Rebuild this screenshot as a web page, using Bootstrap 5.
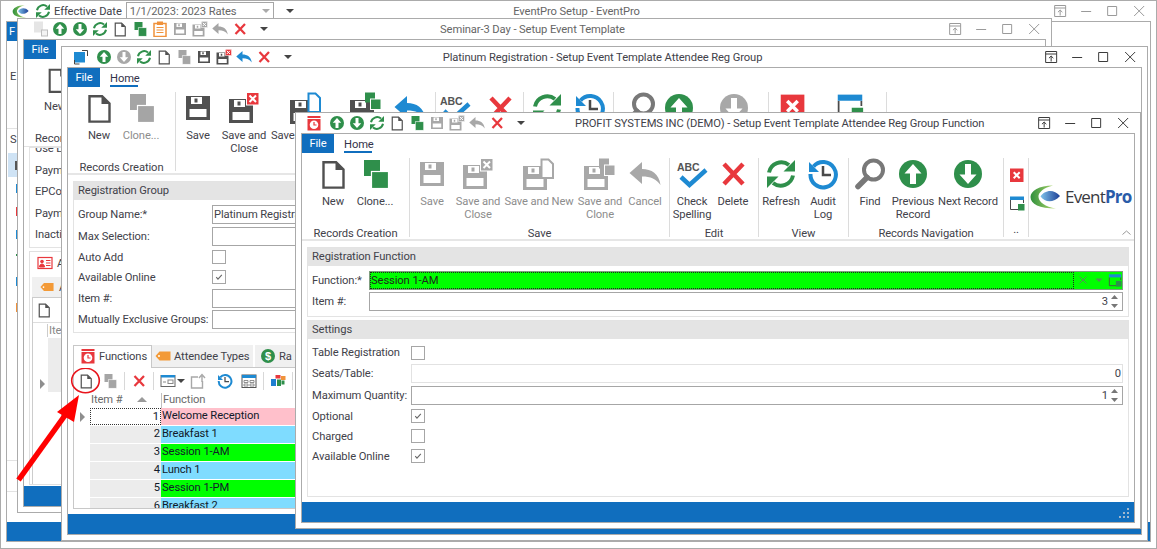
<!DOCTYPE html>
<html lang="en"><head><meta charset="utf-8"><title>EventPro Setup</title>
<link rel="stylesheet" href="https://cdn.jsdelivr.net/npm/bootstrap@5.3.0/dist/css/bootstrap.min.css">
<style>
html,body{margin:0;height:549px;overflow:hidden;background:#fff}
body{font-family:Roboto,"Noto Sans",sans-serif;font-size:11.2px;letter-spacing:-.1px;line-height:13px;color:#42424a}
.dsk{position:relative;width:1157px;height:549px;overflow:hidden}
.wn{position:absolute;background:#fff;border:1px solid #ababab;display:flex;flex-direction:column;overflow:hidden}
.w1{left:0;top:0;width:1157px;height:549px}
.w2{left:17px;top:18px;width:1035px;height:495px}
.w3{left:61px;top:46px;width:1087px;height:495px}
.w4{left:295px;top:112px;width:846px;height:417px}
.ttl{height:20px;flex:none;display:flex;align-items:center;white-space:nowrap}
.ttl-side{flex:1 1 0;display:flex;align-items:center;min-width:0}
.ttl-end{justify-content:flex-end;padding-right:4px}
.ctl{width:26.3px;height:16px;display:block;color:#3c3c3c}
.off .ctl{color:#9a9a9a}
.off .ttl-text{color:#666}
.qa{width:16px;height:16px;flex:none;margin-right:4px;display:block}
.caret{width:0;height:0;border:4px solid transparent;border-top:4px solid #444;border-bottom:0;flex:none}
.cli{flex:1;min-height:0;margin:0 5px 5px;border:1px solid #ababab;display:flex;flex-direction:column;overflow:hidden;background:#fff}
.w1 .cli{margin-bottom:6px}
.tabs{height:19px;flex:none;display:flex}
.ftab{width:32px;height:19px;background:#106ebe;color:#fff;text-align:center;line-height:19px}
.htab{margin-left:10px;width:28px;height:19px;border-bottom:2px solid #106ebe;text-align:center;line-height:21px;color:#33334a}
.ribbon{height:88px;flex:none;display:flex;padding-top:5px;border-bottom:2px solid #e6e6e6}
.rgroup{display:flex;flex-direction:column;height:79px;flex:none;border-right:1px solid #dcdcdc;position:relative}
.rbtns{display:flex;height:69px;flex:none}
.rbtn{display:flex;flex-direction:column;align-items:center;text-align:center;flex:none}
.rbtn svg{width:32px;height:32px;display:block;margin-bottom:5px;flex:none}
.rname{text-align:center;height:14px;line-height:14px;white-space:nowrap}
.rdis{color:#8d8d8d}
.lft{align-self:flex-start;padding-left:3px}
.g1{width:108px}.g2{width:260px}.g3{width:89px}.g4{width:90px}.g5{width:155px}.g6{width:25px}
.g3b{width:88px}
.g7{width:118px}
.g7 .rbtn svg{width:28px;height:28px}
.stack{display:flex;flex-direction:column;align-items:center;padding-top:9px;gap:12px;height:69px;width:25px}
.stack svg{width:16px;height:16px;display:block}
.pl10{padding-left:10px}
.b38{width:38px}.b40{width:40px}.b42{width:42px}.b44{width:44px}.b46{width:46px}.b48{width:48px}.b52{width:52px}.b26{width:26px}.b66{width:66px}.b74{width:74px}.b76{width:76px}.b84{width:84px}
.logo{flex:1;position:relative;display:flex;align-items:flex-start;padding:27px 0 0 1px;gap:5px}
.logo .lgm{width:30px;height:24px;flex:none}
.logotxt{font-family:"Open Sans",sans-serif;font-size:17px;line-height:20px;color:#3a3a40;letter-spacing:-.8px;margin-top:2px}
.logotxt b{color:#2a5ba8;font-weight:700}
.chev{position:absolute;right:3px;bottom:4px;width:9px;height:5px}
.pane{flex:1;min-height:0;padding:6px 5px 5px;display:flex;flex-direction:column;overflow:hidden}
.gbox{border:1px solid #e3e3e3;display:flex;flex-direction:column;flex:none}
.ghead{height:18px;background:#e4e4e4;padding-left:4px;line-height:17px;flex:none}
.frow{height:21px;display:flex;align-items:center;flex:none;padding-left:4px}
.fr20{height:20px}.fr22{height:22px}
.flab{flex:none;white-space:nowrap}
.fld{height:19px;border:1px solid #a6a6a6;background:#fff;flex:1;display:flex;align-items:center;padding:0 1px;min-width:0;white-space:nowrap}
.fld.soft{border-color:#e2e2e2}
.val{margin-left:auto}
.chk{width:14px;height:14px;border:1px solid #a6a6a6;background:#fff;display:block;flex:none}
.spin{width:9px;height:15px;display:block;flex:none;margin:0 2px 0 2px}
.status{height:20px;background:#106ebe;flex:none;position:relative}
.grip{position:absolute;right:5px;bottom:4px;width:10px;height:10px}
.greenf{height:19px;flex:1;background:#00ff00;border:1px solid #7f9f7f;display:flex;align-items:center;min-width:0}
.greeni{flex:1;height:17px;border:1px dotted #222;line-height:15px;color:#1b2b1b}
.gric{width:14px;height:14px;display:block;flex:none;margin:0 0 0 2px}
.l4{width:57px}.l3{width:134px}.l5{width:99px}
.wf{margin-right:5px}
.mt4{margin-top:4px}.mt3{margin-top:3px}
.sg{height:70px}
.sgx{height:177px;margin-top:3px}
.w3g{height:152px}
.l3f{flex:none;width:300px}
.ptabs{display:flex;height:22px;flex:none;margin-top:12px;align-items:flex-start;position:relative}
.ptab{height:22px;display:flex;align-items:center;gap:3px;background:#f0f0f0;border-right:2px solid #fff;flex:none;white-space:nowrap}
.ptab.on{background:#fff;border:1px solid #c8c8c8;border-bottom:0;height:23px;width:79px;padding:0 0 2px 6px;position:relative;z-index:1}
.ptab svg{width:16px;height:16px;flex:none}
.p2{width:103px;padding-left:3px}
.p3{width:60px;padding-left:5px}
.pbox{flex:1;min-height:0;border:1px solid #c8c8c8;display:flex;flex-direction:column;overflow:hidden}
.gtool{height:25px;display:flex;align-items:center;padding-left:4px;flex:none}
.gtool svg{width:16px;height:16px;flex:none;display:block}
.gsp{width:1px;height:18px;background:#d8d8d8;flex:none}
.ghdr{height:15px;display:flex;flex:none;color:#6a6a6a}
.gind{width:16px;flex:none;position:relative}
.gitem{width:71px;flex:none;padding-left:1px;position:relative}
.gfn{flex:1;border-left:1px solid #c0c0c0;padding-left:1px}
.grow1{height:17px;display:flex;flex:none;margin-bottom:1px;line-height:16px;color:#111a2a;white-space:nowrap}
.gnum{width:71px;flex:none;background:#ececec;text-align:right;padding-right:1px}
.gnum.cur{background:#fff;border:1px dotted #333}
.gcell{flex:1;padding-left:1px}
.pink{background:#ffc0cb}.sky{background:#7fdcff}.lime{background:#00ff00}
.tri{position:absolute;left:6px;top:4px;width:0;height:0;border:5px solid transparent;border-left:5px solid #8e8e8e;border-right:0}
.sorttri{position:absolute;left:47px;top:4px;width:0;height:0;border:5px solid transparent;border-bottom:5px solid #9a9a9a;border-top:0}
.over{position:absolute;left:0;top:0;width:1157px;height:549px;pointer-events:none}
.w1side{flex:1;min-height:0;display:flex;flex-direction:column;width:12px;overflow:hidden}
.clip{white-space:nowrap}
.lgrey{border-bottom:1px solid #e3e3e3}
.hl{height:24px;background:#cfe3f5;margin-left:1px;flex:none;display:flex;align-items:center;justify-content:flex-end}
.pad2l{padding-left:2px}
.w2r{height:107px;flex:none;display:flex;flex-direction:column;border-bottom:1px solid #e3e3e3}
.w2n{padding-left:20px;padding-top:7px}
.w2n svg{width:28px;height:28px;display:block;margin-bottom:6px}
.w2rec{padding-left:11px;margin-top:19px}
.w2box{margin:0 0 0 5px;height:101px;border:1px solid #e3e3e3;flex:none;padding-left:5px;line-height:21.6px;overflow:hidden;white-space:nowrap}
.w2box div:first-child{margin-top:-10px}
.w2ptab{margin:3px 0 0 5px;height:234px;border:1px solid #e0e0e0;flex:none;padding:2px 0 0 2px;overflow:hidden;white-space:nowrap}
.w2a{display:flex;align-items:center;gap:4px;height:18px;padding-left:5px}
.w2a svg{width:16px;height:16px}
.w2b{display:flex;align-items:center;gap:5px;height:20px;margin-top:5px;background:#f0f0f0;padding-left:8px;width:60px}
.w2b svg{width:14px;height:16px}
.w2c{border:1px solid #ccc;height:190px}
.w2d{height:25px;padding:4px 0 0 3px;border-bottom:1px solid #ddd}
.w2d svg{width:16px;height:16px;display:block}
.w2e{height:15px;padding-left:14px;color:#888;line-height:15px}
.w2e span{border-left:1px solid #ccc;padding-left:1px}
.w2g{height:54px;margin-left:15px;background:#ececec;position:relative}
.w2t{position:absolute;left:-8px;top:41px;width:0;height:0;border:5px solid transparent;border-left:5px solid #8e8e8e;border-right:0}
.pdl{padding:4px 0 0 3px;height:24px;flex:none}
.sp1{height:88px;flex:none;padding-top:29px;padding-left:3px}
.ic-green svg,svg.ic-green{color:#2f8f4b}
.ic-dark svg,svg.ic-dark{color:#505050}
.ic-grey svg,svg.ic-grey{color:#a5a5a5}
.ic-ltgrey svg,svg.ic-ltgrey{color:#a8a8a8}
.ic-red svg,svg.ic-red{color:#e8383d}
.ic-blue svg,svg.ic-blue{color:#1e8ad2}
.gx{--xb:#a8a8a8}
.bl1{--db:#1e8ad2}.gr1{--db:#2f8f4b}
.q4first{margin-left:10px;margin-right:7px}
.q3first{margin-left:11px;margin-right:7px}
.q2first{margin-left:15px;margin-right:3px}
.f-left{flex:none}
.logoq{margin-left:11px;width:17px;height:13px;margin-right:6px}
.refq{margin-right:3px}
.combo{width:148px;height:18px;border:1px solid #a6a6a6;padding:0 3px;color:#666;white-space:nowrap;flex:none}
.combo .caret{border-top-color:#aaa}
.tailc{margin-left:12px}
.w4 .ttl-text{margin-left:50px}
.w4 .ttl-end{flex:none;margin-left:auto}
.tgap1{margin-left:1px}.tgap5{margin-left:5px}.tgap6{margin-left:6px}.tgap8{margin-left:8px}.tgap11{margin-left:11px}
.d1{display:block;width:3px;height:9px;background:#555;margin-right:1px}
.d2{display:block;width:3px;height:9px;margin:14px 0 0 auto;flex:none}
.d2.a{background:#1e8ad2;margin-top:7px}.d2.b{background:#e8383d}.d2.c{background:#1e8ad2}.d2.d{background:#2f8f4b;height:2px;margin-top:15px}.d2.e{background:#1e8ad2;margin-top:21px}.d2.f{background:#f0923b;margin-top:17px}
.spx{height:30px;flex:none}
.spy{height:31px;flex:none;border-top:1px solid #e3e3e3}
.w1v{height:19px}
</style></head><body>
<svg width="0" height="0" class="position-absolute" aria-hidden="true"><defs>
<linearGradient id="lb" x1="0" x2="1"><stop offset="0" stop-color="#7fc3ea"/><stop offset="1" stop-color="#1c3f96"/></linearGradient>
<linearGradient id="lg" x1="0" x2="1"><stop offset="0" stop-color="#2f8f3c"/><stop offset="1" stop-color="#b6da6e"/></linearGradient>
<symbol id="s-new" viewBox="0 0 32 32"><path d="M6.5 4.2h12.600l7.400 7.400v18H6.500z" fill="#fff" stroke="currentColor" stroke-width="2.400"/><path d="M18.500 4l8 8h-8z" fill="currentColor"/></symbol>
<symbol id="s-clone" viewBox="0 0 32 32"><rect x="5" y="2" width="16" height="16" fill="currentColor"/><rect x="12.500" y="13.500" width="17" height="17" fill="currentColor" stroke="#fff" stroke-width="1.200"/></symbol>
<symbol id="s-up" viewBox="0 0 32 32"><circle cx="16" cy="16" r="14" fill="currentColor"/><path d="M16 6l8.500 9.500h-5.500v10.500h-6v-10.500h-5.500z" fill="#fff"/></symbol>
<symbol id="s-down" viewBox="0 0 32 32"><circle cx="16" cy="16" r="14" fill="currentColor"/><path d="M16 26l8.500-9.500h-5.500v-10.500h-6v10.500h-5.500z" fill="#fff"/></symbol>
<symbol id="s-ref" viewBox="0 0 32 32"><path d="M4 14.500A12.500 12.500 0 0 1 24 7" fill="none" stroke="currentColor" stroke-width="4"/><path d="M18.500 13.500H30V2z" fill="currentColor"/><path d="M28 17.500A12.500 12.500 0 0 1 8 25" fill="none" stroke="currentColor" stroke-width="4"/><path d="M13.500 18.500H2V30z" fill="currentColor"/></symbol>
<symbol id="s-sv" viewBox="0 0 32 32"><path fill-rule="evenodd" d="M4 4h24v24H4zM9 5v7h11V5zM12.500 6.500h3v4h-3zM7.500 17v8h17v-8z" fill="currentColor"/></symbol>
<symbol id="s-svx" viewBox="0 0 32 32"><path fill-rule="evenodd" d="M1 7h24v24H1zM6 8v7h11V8zM9.500 9.500h3v4h-3zM4.500 20v8h17v-8z" fill="currentColor"/><rect x="18.500" y="0.500" width="12.500" height="12.500" fill="var(--xb,#e8383d)" stroke="#fff"/><path d="M21.500 3.500l6.500 6.500M28 3.500l-6.500 6.500" stroke="#fff" stroke-width="2"/></symbol>
<symbol id="s-svn" viewBox="0 0 32 32"><path fill-rule="evenodd" d="M0 8h24v24H0zM5 9v7h11V9zM8.500 10.500h3v4h-3zM3.500 21v8h17v-8z" fill="currentColor"/><path d="M18.500 1.500h7l4.500 4.500v14h-11.500z" fill="#fff" stroke="var(--db,currentColor)" stroke-width="2"/></symbol>
<symbol id="s-svc" viewBox="0 0 32 32"><path fill-rule="evenodd" d="M0 8h24v24H0zM5 9v7h11V9zM8.500 10.500h3v4h-3zM3.500 21v8h17v-8z" fill="currentColor"/><rect x="15" y="0.500" width="10" height="10" fill="var(--db,currentColor)"/><rect x="20.500" y="7" width="10.500" height="10.500" fill="var(--db,currentColor)" stroke="#fff"/></symbol>
<symbol id="s-und" viewBox="0 0 32 32"><path d="M0.500 15L13 4v7c9.500 0 17 4.500 18.500 16-4-6-10-8.500-18.500-8.500V26z" fill="currentColor"/></symbol>
<symbol id="s-x" viewBox="0 0 32 32"><path d="M7 6l19 20M26 6L7 26" stroke="currentColor" stroke-width="4.500" fill="none"/></symbol>
<symbol id="s-abc" viewBox="0 0 32 32"><text x="1" y="12.500" font-family="Liberation Sans" font-weight="700" font-size="10.500" fill="#555">ABC</text><path d="M5 19l8.500 8L30 12" fill="none" stroke="#1e8ad2" stroke-width="4.500"/></symbol>
<symbol id="s-aud" viewBox="0 0 32 32"><path d="M6.500 8.500A12.700 12.700 0 1 1 3.500 16" fill="none" stroke="#1e8ad2" stroke-width="4"/><path d="M2 4v10h10z" fill="#1e8ad2"/><path d="M16 8v9h8" fill="none" stroke="#4a4a4a" stroke-width="2.500"/></symbol>
<symbol id="s-find" viewBox="0 0 32 32"><circle cx="19.500" cy="12" r="9.500" fill="none" stroke="#787878" stroke-width="4"/><path d="M13 19.500L4 28.500" stroke="#787878" stroke-width="5.500" stroke-linecap="round"/></symbol>
<symbol id="s-rx" viewBox="0 0 16 16"><rect x="1" y="1.500" width="13.500" height="13.500" fill="#e8383d"/><path d="M4.700 5.200l6 6M10.700 5.200l-6 6" stroke="#fff" stroke-width="2"/></symbol>
<symbol id="s-win" viewBox="0 0 16 16"><path d="M1.500 5v9.500H13" fill="none" stroke="#4a4a4a"/><path d="M14.500 5v3" stroke="#4a4a4a"/><rect x="1" y="1.500" width="14" height="3.500" fill="#1e8ad2"/><rect x="9" y="9" width="6.500" height="6.500" fill="#2f8f4b"/></symbol>
<symbol id="s-clock" viewBox="0 0 16 16"><rect x="1.500" y="1" width="13" height="2" fill="#e8383d"/><rect x="1.500" y="4" width="13" height="11.500" fill="#e8383d"/><circle cx="8" cy="9.700" r="4.300" fill="#fff"/><path d="M8 7v3h2.500" fill="none" stroke="#e8383d" stroke-width="1.200"/></symbol>
<symbol id="s-rsz" viewBox="0 0 16 16"><rect x="1" y="3" width="11" height="10.500" fill="#1e8ad2"/><path d="M9 1.500h5.500V7" fill="none" stroke="#444"/><path d="M1.500 11v4h5" fill="none" stroke="#444"/></symbol>
<symbol id="s-clip" viewBox="0 0 16 16"><rect x="2" y="2.500" width="12" height="13" fill="#fff" stroke="#f0923b" stroke-width="1.500"/><rect x="5" y="0.500" width="6" height="3.500" fill="#f0923b"/><path d="M4.500 6.500h7M4.500 9h7M4.500 11.500h7" stroke="#f0923b"/></symbol>
<symbol id="s-blur" viewBox="0 0 16 16"><rect x="1" y="0.500" width="9" height="11" fill="#e5e5e5"/><rect x="8.500" y="9" width="6" height="6" fill="#f3f3f3" stroke="#bdbdbd"/></symbol>
<symbol id="s-pin" viewBox="0 0 16 16"><path d="M2.500 2.500h11v11h-11zM2.500 5h11" fill="none" stroke="currentColor"/><path d="M8 12.500V7M5.800 9.200L8 7l2.200 2.200" fill="none" stroke="currentColor"/></symbol>
<symbol id="s-min" viewBox="0 0 16 16"><path d="M3 8.500h10" stroke="currentColor"/></symbol>
<symbol id="s-max" viewBox="0 0 16 16"><path d="M3.500 3.500h9v9h-9z" fill="none" stroke="currentColor"/></symbol>
<symbol id="s-cls" viewBox="0 0 16 16"><path d="M3 3l10 10M13 3L3 13" stroke="currentColor" fill="none"/></symbol>
<symbol id="s-tag" viewBox="0 0 16 16"><path d="M0.500 8L4.500 3.500h11v9h-11z" fill="#f39a37"/><circle cx="4" cy="8" r="1" fill="#fff"/></symbol>
<symbol id="s-card" viewBox="0 0 16 16"><rect x="1" y="2.500" width="14" height="11" fill="#fff" stroke="#e8383d" stroke-width="1.200"/><circle cx="5" cy="6.500" r="1.800" fill="#e8383d"/><path d="M2.500 12c0-4 5-4 5 0zM9 5.500h4.500M9 8h4.500M9 10.500h4.500" fill="#e8383d" stroke="#e8383d"/></symbol>
<symbol id="s-usd" viewBox="0 0 16 16"><circle cx="8" cy="8" r="7" fill="#2f8f4b"/><text x="8" y="12" text-anchor="middle" font-family="Liberation Sans" font-weight="700" font-size="11" fill="#fff">$</text></symbol>
<symbol id="s-cols" viewBox="0 0 16 16"><rect x="1" y="2.500" width="14" height="11" fill="#fff" stroke="#666"/><rect x="1" y="2" width="14" height="2.500" fill="#1e8ad2"/><rect x="8" y="7" width="5" height="3.500" fill="none" stroke="#888"/><path d="M3 9h3" stroke="#888"/></symbol>
<symbol id="s-mv" viewBox="0 0 16 16"><path d="M8 4H1.500v11h11v-7" fill="none" stroke="#a8a8a8" stroke-width="1.400"/><path d="M12 9V3M9 5l3-3.500L15 5" fill="none" stroke="#a8a8a8" stroke-width="1.400"/></symbol>
<symbol id="s-frm" viewBox="0 0 16 16"><rect x="1" y="2" width="14" height="12.500" fill="#fff" stroke="#555"/><rect x="1" y="2" width="14" height="3" fill="#1e8ad2"/><path d="M3 7.500h4v2H3zM3 11h4v2H3zM9 7.500h4v2H9zM9 11h4v2H9z" fill="none" stroke="#777" stroke-width=".8"/></symbol>
<symbol id="s-clr" viewBox="0 0 16 16"><rect x="5.500" y="2" width="5" height="3.500" fill="#e8383d"/><rect x="11" y="3" width="4.500" height="4" fill="#f0923b"/><rect x="1" y="6" width="5" height="7" fill="#1e7fd0"/><rect x="7" y="6.500" width="4" height="6.500" fill="#2f8f4b"/><rect x="11.500" y="7.500" width="3" height="4" fill="#2f8f4b"/></symbol>
<symbol id="s-chk" viewBox="0 0 14 14"><path d="M3.800 7.200l2 2.200 4.500-4.800" fill="none" stroke="#666" stroke-width="1.300"/></symbol>
<symbol id="s-spin" viewBox="0 0 9 15"><path d="M4.500 1L8 5H1zM1 10h7l-3.500 4z" fill="#777"/></symbol>
<symbol id="s-logo" viewBox="0 0 30 24"><path d="M23 0.500C9 0.500 0.500 6 0.500 12c0 7 9 11.500 25.500 11.500C15 21.500 9 17.500 8.500 12 8 7.500 14 2.500 23 0.500z" fill="url(#lg)"/><path d="M10.500 11.500C14 6 23 3 30 11c-7 7.500-15 6.500-19.500.5z" fill="url(#lb)"/></symbol>
</defs></svg>

<main class="dsk">

<section class="wn w1 off">
  <div class="ttl">
    <div class="ttl-side">
      <svg class="qa logoq"><use href="#s-logo"/></svg>
      <svg class="qa refq ic-green"><use href="#s-ref"/></svg>
      <span class="me-1">Effective Date</span>
      <span class="combo d-flex align-items-center">1/1/2023: 2023 Rates<i class="caret ms-auto"></i></span>
      <i class="caret tailc"></i>
    </div>
    <span class="ttl-text">EventPro Setup - EventPro</span>
    <div class="ttl-side ttl-end">
      <svg class="ctl"><use href="#s-pin"/></svg><svg class="ctl"><use href="#s-min"/></svg><svg class="ctl"><use href="#s-max"/></svg><svg class="ctl"><use href="#s-cls"/></svg>
    </div>
  </div>
  <div class="cli">
    <div class="w1side">
      <div class="tabs"><div class="ftab pad2l text-start">F</div></div>
      <div class="sp1 lgrey">E</div>
      <div class="pdl clip">S</div>
      <div class="hl"><span class="d1"></span></div>
      <span class="d2 a"></span><span class="d2 b"></span><span class="d2 c"></span><span class="d2 d"></span><span class="d2 e"></span><span class="d2 f"></span>
      <div class="flex-grow-1 lgrey"></div>
      <div class="spx"></div>
      <div class="spy"></div>
    </div>
    <div class="status w1v"></div>
  </div>
</section>

<section class="wn w2 off">
  <div class="ttl">
    <div class="ttl-side">
      <svg class="qa q2first"><use href="#s-blur"/></svg>
      <svg class="qa ic-green"><use href="#s-up"/></svg><svg class="qa ic-green"><use href="#s-down"/></svg><svg class="qa ic-green"><use href="#s-ref"/></svg>
      <svg class="qa ic-dark"><use href="#s-new"/></svg><svg class="qa ic-green"><use href="#s-clone"/></svg><svg class="qa"><use href="#s-clip"/></svg>
      <svg class="qa ic-grey"><use href="#s-sv"/></svg><svg class="qa ic-grey gx"><use href="#s-svx"/></svg><svg class="qa ic-grey"><use href="#s-und"/></svg><svg class="qa ic-red"><use href="#s-x"/></svg>
      <i class="caret ms-2"></i>
    </div>
    <span class="ttl-text">Seminar-3 Day - Setup Event Template</span>
    <div class="ttl-side ttl-end">
      <svg class="ctl"><use href="#s-pin"/></svg><svg class="ctl"><use href="#s-min"/></svg><svg class="ctl"><use href="#s-max"/></svg><svg class="ctl"><use href="#s-cls"/></svg>
    </div>
  </div>
  <div class="cli">
    <div class="w2r">
      <div class="tabs"><div class="ftab">File</div></div>
      <div class="w2n ic-dark"><svg><use href="#s-new"/></svg><span class="clip">New</span></div>
      <div class="w2rec clip">Recor</div>
    </div>
    <div class="w2box">
      <div>Use L</div><div>Paym</div><div>EPCor</div><div>Paym</div><div>Inacti</div>
    </div>
    <div class="w2ptab">
      <div class="w2a"><svg><use href="#s-card"/></svg>A</div>
      <div class="w2b"><svg><use href="#s-tag"/></svg>A</div>
      <div class="w2c">
        <div class="w2d ic-dark"><svg><use href="#s-new"/></svg></div>
        <div class="w2e"><span>Ite</span></div>
        <div class="w2g"><i class="w2t"></i></div>
      </div>
    </div>
    <div class="flex-grow-1"></div>
    <div class="status"></div>
  </div>
</section>

<section class="wn w3">
  <div class="ttl">
    <div class="ttl-side">
      <svg class="qa q3first"><use href="#s-rsz"/></svg>
      <svg class="qa ic-green"><use href="#s-up"/></svg><svg class="qa ic-ltgrey"><use href="#s-down"/></svg><svg class="qa ic-green"><use href="#s-ref"/></svg>
      <svg class="qa ic-dark"><use href="#s-new"/></svg><svg class="qa ic-grey"><use href="#s-clone"/></svg>
      <svg class="qa ic-dark"><use href="#s-sv"/></svg><svg class="qa ic-dark"><use href="#s-svx"/></svg><svg class="qa ic-blue"><use href="#s-und"/></svg><svg class="qa ic-red"><use href="#s-x"/></svg>
      <i class="caret ms-2"></i>
    </div>
    <span class="ttl-text">Platinum Registration - Setup Event Template Attendee Reg Group</span>
    <div class="ttl-side ttl-end">
      <svg class="ctl"><use href="#s-pin"/></svg><svg class="ctl"><use href="#s-min"/></svg><svg class="ctl"><use href="#s-max"/></svg><svg class="ctl"><use href="#s-cls"/></svg>
    </div>
  </div>
  <div class="cli">
    <div class="tabs"><div class="ftab">File</div><div class="htab">Home</div></div>
    <div class="ribbon">
      <div class="rgroup g1">
        <div class="rbtns pl10"><div class="rbtn b42 ic-dark"><svg><use href="#s-new"/></svg>New</div><div class="rbtn b42 ic-grey rdis"><svg><use href="#s-clone"/></svg>Clone...</div></div>
        <div class="rname">Records Creation</div>
      </div>
      <div class="rgroup g2">
        <div class="rbtns"><div class="rbtn b44 ic-dark"><svg><use href="#s-sv"/></svg>Save</div><div class="rbtn b48 ic-dark"><svg><use href="#s-svx"/></svg>Save and Close</div><div class="rbtn b76 ic-dark bl1"><svg><use href="#s-svn"/></svg><span class="lft">Save</span></div><div class="rbtn b44 ic-dark gr1"><svg><use href="#s-svc"/></svg></div><div class="rbtn b44 ic-blue"><svg><use href="#s-und"/></svg></div></div>
      </div>
      <div class="rgroup g3 g3b">
        <div class="rbtns"><div class="rbtn b38"><svg><use href="#s-abc"/></svg></div><div class="rbtn b52 ic-red"><svg><use href="#s-x"/></svg></div></div>
      </div>
      <div class="rgroup g4">
        <div class="rbtns"><div class="rbtn b46 ic-green"><svg><use href="#s-ref"/></svg></div><div class="rbtn b40"><svg><use href="#s-aud"/></svg></div></div>
      </div>
      <div class="rgroup g5">
        <div class="rbtns"><div class="rbtn b52"><svg><use href="#s-find"/></svg></div><div class="rbtn b26 ic-green"><svg><use href="#s-up"/></svg></div><div class="rbtn b84 ic-ltgrey"><svg><use href="#s-down"/></svg></div></div>
      </div>
      <div class="rgroup g7">
        <div class="rbtns"><div class="rbtn b48"><svg><use href="#s-rx"/></svg></div><div class="rbtn b66"><svg><use href="#s-win"/></svg></div></div>
      </div>
    </div>
    <div class="pane">
      <div class="gbox w3g">
        <div class="ghead">Registration Group</div>
        <div class="frow mt4"><span class="flab l3">Group Name:*</span><span class="fld l3f">Platinum Registra</span></div>
        <div class="frow fr22"><span class="flab l3">Max Selection:</span><span class="fld l3f"></span></div>
        <div class="frow fr20"><span class="flab l3">Auto Add</span><span class="chk"></span></div>
        <div class="frow fr20"><span class="flab l3">Available Online</span><svg class="chk"><use href="#s-chk"/></svg></div>
        <div class="frow fr22"><span class="flab l3">Item #:</span><span class="fld l3f"></span></div>
        <div class="frow"><span class="flab l3">Mutually Exclusive Groups:</span><span class="fld l3f"></span></div>
      </div>
      <div class="ptabs">
        <div class="ptab on"><svg><use href="#s-clock"/></svg>Functions</div>
        <div class="ptab p2"><svg><use href="#s-tag"/></svg>Attendee Types</div>
        <div class="ptab p3"><svg><use href="#s-usd"/></svg>Ra</div>
      </div>
      <div class="pbox">
        <div class="gtool">
          <svg class="ic-dark"><use href="#s-new"/></svg>
          <svg class="ic-grey tgap8"><use href="#s-clone"/></svg>
          <span class="gsp tgap6"></span>
          <svg class="ic-red tgap6"><use href="#s-x"/></svg>
          <span class="gsp tgap6"></span>
          <svg class="tgap6"><use href="#s-cols"/></svg><i class="caret tgap1"></i>
          <svg class="tgap5"><use href="#s-mv"/></svg>
          <svg class="tgap11"><use href="#s-aud"/></svg>
          <svg class="tgap8"><use href="#s-frm"/></svg>
          <span class="gsp tgap6"></span>
          <svg class="tgap6"><use href="#s-clr"/></svg>
          <span class="gsp tgap6"></span>
        </div>
        <div class="ghdr"><div class="gind"></div><div class="gitem">Item #<i class="sorttri"></i></div><div class="gfn">Function</div></div>
        <div class="grow1"><div class="gind"><i class="tri"></i></div><div class="gnum cur">1</div><div class="gcell pink">Welcome Reception</div></div>
        <div class="grow1"><div class="gind"></div><div class="gnum">2</div><div class="gcell sky">Breakfast 1</div></div>
        <div class="grow1"><div class="gind"></div><div class="gnum">3</div><div class="gcell lime">Session 1-AM</div></div>
        <div class="grow1"><div class="gind"></div><div class="gnum">4</div><div class="gcell sky">Lunch 1</div></div>
        <div class="grow1"><div class="gind"></div><div class="gnum">5</div><div class="gcell lime">Session 1-PM</div></div>
        <div class="grow1"><div class="gind"></div><div class="gnum">6</div><div class="gcell sky">Breakfast 2</div></div>
      </div>
    </div>
    <div class="status"></div>
  </div>
</section>

<section class="wn w4">
  <div class="ttl">
    <div class="ttl-side f-left">
      <svg class="qa q4first"><use href="#s-clock"/></svg>
      <svg class="qa ic-green"><use href="#s-up"/></svg><svg class="qa ic-green"><use href="#s-down"/></svg><svg class="qa ic-green"><use href="#s-ref"/></svg>
      <svg class="qa ic-dark"><use href="#s-new"/></svg><svg class="qa ic-green"><use href="#s-clone"/></svg>
      <svg class="qa ic-ltgrey"><use href="#s-sv"/></svg><svg class="qa ic-ltgrey gx"><use href="#s-svx"/></svg><svg class="qa ic-ltgrey"><use href="#s-und"/></svg><svg class="qa ic-red"><use href="#s-x"/></svg>
      <i class="caret ms-2"></i>
    </div>
    <span class="ttl-text">PROFIT SYSTEMS INC (DEMO) - Setup Event Template Attendee Reg Group Function</span>
    <div class="ttl-side ttl-end">
      <svg class="ctl"><use href="#s-pin"/></svg><svg class="ctl"><use href="#s-min"/></svg><svg class="ctl"><use href="#s-max"/></svg><svg class="ctl"><use href="#s-cls"/></svg>
    </div>
  </div>
  <div class="cli">
    <div class="tabs"><div class="ftab">File</div><div class="htab">Home</div></div>
    <div class="ribbon">
      <div class="rgroup g1">
        <div class="rbtns pl10"><div class="rbtn b42 ic-dark"><svg><use href="#s-new"/></svg>New</div><div class="rbtn b42 ic-green"><svg><use href="#s-clone"/></svg>Clone...</div></div>
        <div class="rname">Records Creation</div>
      </div>
      <div class="rgroup g2">
        <div class="rbtns rdis ic-ltgrey gx"><div class="rbtn b44"><svg><use href="#s-sv"/></svg>Save</div><div class="rbtn b48"><svg><use href="#s-svx"/></svg>Save and Close</div><div class="rbtn b74"><svg><use href="#s-svn"/></svg>Save and New</div><div class="rbtn b48"><svg><use href="#s-svc"/></svg>Save and Clone</div><div class="rbtn b42"><svg><use href="#s-und"/></svg>Cancel</div></div>
        <div class="rname">Save</div>
      </div>
      <div class="rgroup g3">
        <div class="rbtns"><div class="rbtn b44"><svg><use href="#s-abc"/></svg>Check Spelling</div><div class="rbtn b38 ic-red"><svg><use href="#s-x"/></svg>Delete</div></div>
        <div class="rname">Edit</div>
      </div>
      <div class="rgroup g4">
        <div class="rbtns"><div class="rbtn b44 ic-green"><svg><use href="#s-ref"/></svg>Refresh</div><div class="rbtn b40"><svg><use href="#s-aud"/></svg>Audit Log</div></div>
        <div class="rname">View</div>
      </div>
      <div class="rgroup g5">
        <div class="rbtns"><div class="rbtn b42"><svg><use href="#s-find"/></svg>Find</div><div class="rbtn b44 ic-green"><svg><use href="#s-up"/></svg>Previous Record</div><div class="rbtn b66 ic-green"><svg><use href="#s-down"/></svg>Next Record</div></div>
        <div class="rname">Records Navigation</div>
      </div>
      <div class="rgroup g6">
        <div class="stack"><svg><use href="#s-rx"/></svg><svg><use href="#s-win"/></svg></div>
        <div class="rname">..</div>
      </div>
      <div class="logo">
        <svg class="lgm"><use href="#s-logo"/></svg>
        <span class="logotxt">Event<b>Pro</b></span>
        <svg class="chev" viewBox="0 0 9 5"><path d="M.5 4.500L4.500 1l4 3.500" fill="none" stroke="#999"/></svg>
      </div>
    </div>
    <div class="pane">
      <div class="gbox sg">
        <div class="ghead">Registration Function</div>
        <div class="frow mt-1 fr20"><span class="flab l4">Function:*</span>
          <div class="greenf"><div class="greeni">Session 1-AM</div>
            <svg class="gric" viewBox="0 0 14 14"><path d="M3.500 3.500l7 7M10.500 3.500l-7 7" stroke="#5a8a5a"/></svg>
            <svg class="gric" viewBox="0 0 14 14"><path d="M3.500 5.500h7L7 9z" fill="#5a8a5a"/></svg>
            <svg class="gric"><use href="#s-win"/></svg>
          </div><span class="wf"></span></div>
        <div class="frow fr22"><span class="flab l4">Item #:</span><span class="fld"><span class="val">3</span><svg class="spin"><use href="#s-spin"/></svg></span><span class="wf"></span></div>
      </div>
      <div class="gbox sgx">
        <div class="ghead">Settings</div>
        <div class="frow mt3"><span class="flab l5">Table Registration</span><span class="chk"></span></div>
        <div class="frow"><span class="flab l5">Seats/Table:</span><span class="fld soft"><span class="val">0</span></span><span class="wf"></span></div>
        <div class="frow fr22"><span class="flab l5">Maximum Quantity:</span><span class="fld"><span class="val">1</span><svg class="spin"><use href="#s-spin"/></svg></span><span class="wf"></span></div>
        <div class="frow fr20"><span class="flab l5">Optional</span><svg class="chk"><use href="#s-chk"/></svg></div>
        <div class="frow fr20"><span class="flab l5">Charged</span><span class="chk"></span></div>
        <div class="frow fr20"><span class="flab l5">Available Online</span><svg class="chk"><use href="#s-chk"/></svg></div>
      </div>
    </div>
    <div class="status">
      <svg class="grip" viewBox="0 0 10 10"><path d="M8 0h2v2H8zM4 4h2v2H4zM8 4h2v2H8zM0 8h2v2H0zM4 8h2v2H4zM8 8h2v2H8z" fill="#9fb8cf"/></svg>
    </div>
  </div>
</section>

<svg class="over" viewBox="0 0 1157 549" aria-hidden="true">
  <ellipse cx="85.500" cy="380.500" rx="13.800" ry="12.300" fill="none" stroke="#e8141c" stroke-width="1.600"/>
  <path d="M18.500 480L66 414" stroke="#f00" stroke-width="5.500" fill="none"/>
  <path d="M79 395L57 412 74 422z" fill="#f00"/>
</svg>
</main>
</body></html>
